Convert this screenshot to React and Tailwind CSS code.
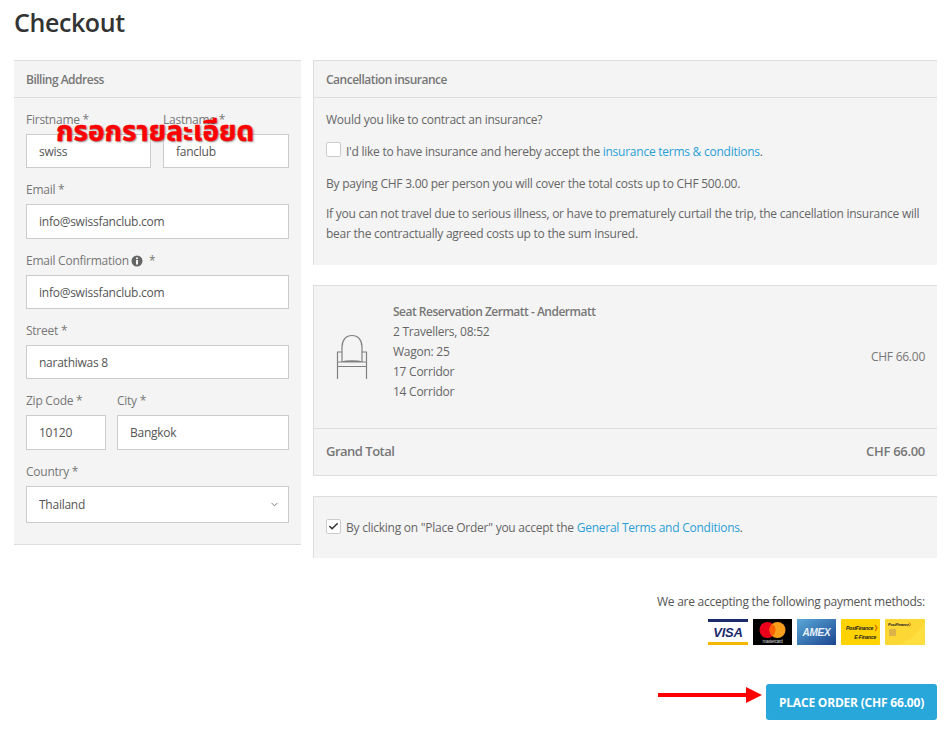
import React from "react";
import { ChevronDown, Check } from "lucide-react";

function Label({ children }) {
  return <label className="block h-5 mb-[5px] pt-px leading-5 text-[#777] whitespace-nowrap">{children}</label>;
}

const inputCls = "block w-full border border-[#ccc] bg-white px-3 text-[#555] outline-none tracking-[-0.25px]";

function Field({ label, value, h = "h-[34px]", className = "" }) {
  return (
    <div className={className}>
      <Label>{label}</Label>
      <input readOnly value={value} className={`${inputCls} ${h}`} />
    </div>
  );
}

function Chair() {
  return (
    <svg width="32" height="46" viewBox="0 0 32 46" fill="none" stroke="#808080" strokeWidth="1.2">
      <path d="M6 28V13C6 6 10 1.5 16 1.5S26 6 26 13V28" />
      <path d="M1.5 18V45M30.5 18V45M1 18H6M26 18H31" />
      <path d="M2 28H30M2 32.5H30M6 28C10 26.5 22 26.5 26 28" />
    </svg>
  );
}

function Cards() {
  return (
    <div className="flex justify-end gap-[5px] mt-[7px]">
      <svg width="40" height="26" viewBox="0 0 40 26">
        <rect width="40" height="26" fill="#fff" />
        <rect width="40" height="3" fill="#1a2a6c" />
        <rect y="23" width="40" height="3" fill="#f7b600" />
        <text x="20" y="18" textAnchor="middle" fontFamily="Liberation Sans" fontWeight="700" fontStyle="italic" fontSize="13" fill="#1a2a6c">VISA</text>
      </svg>
      <svg width="39" height="26" viewBox="0 0 39 26">
        <rect width="39" height="26" fill="#000" />
        <circle cx="14.5" cy="11" r="8" fill="#eb001b" />
        <circle cx="24.5" cy="11" r="8" fill="#f79e1b" />
        <path d="M19.5 4.8a8 8 0 0 1 0 12.4a8 8 0 0 1 0-12.4z" fill="#ff5f00" />
        <text x="19.5" y="23.5" textAnchor="middle" fontFamily="Liberation Sans" fontSize="4.5" fill="#ddd">mastercard</text>
      </svg>
      <svg width="39" height="26" viewBox="0 0 39 26">
        <defs>
          <linearGradient id="amex" x1="0" y1="0" x2="1" y2="1">
            <stop offset="0" stopColor="#5aa9d8" />
            <stop offset="1" stopColor="#1c4590" />
          </linearGradient>
        </defs>
        <rect width="39" height="26" fill="url(#amex)" />
        <text x="19.5" y="16.5" textAnchor="middle" fontFamily="Liberation Sans" fontWeight="700" fontStyle="italic" fontSize="10" fill="#e8f2fa">AMEX</text>
      </svg>
      <svg width="39" height="26" viewBox="0 0 39 26">
        <rect width="39" height="26" rx="1" fill="#ffd200" />
        <text x="5" y="11" fontFamily="Liberation Sans" fontWeight="700" fontStyle="italic" fontSize="5" fill="#222">PostFinance</text>
        <path d="M34 6l2 3-2 3" fill="none" stroke="#e8600a" strokeWidth="1.2" />
        <text x="35" y="20" textAnchor="end" fontFamily="Liberation Sans" fontWeight="700" fontStyle="italic" fontSize="5" fill="#222">E-Finance</text>
      </svg>
      <svg width="40" height="26" viewBox="0 0 40 26">
        <rect width="40" height="26" rx="1" fill="#fdd835" />
        <path d="M14 26C26 20 36 12 40 2V26Z" fill="#ffde3f" />
        <text x="3" y="7" fontFamily="Liberation Sans" fontWeight="700" fontStyle="italic" fontSize="4" fill="#222">PostFinance</text>
        <path d="M24 3.5l1.5 2-1.5 2" fill="none" stroke="#e8600a" strokeWidth="1" />
        <rect x="4" y="10" width="7" height="7" rx="1" fill="#d9b24a" />
      </svg>
    </div>
  );
}

export default function App() {
  return (
    <div className="relative w-[949px] h-[734px] overflow-hidden bg-white pl-[14px] pr-[12px] text-[12px] tracking-[-0.25px] text-[#666] font-['Open_Sans',sans-serif]">
      <h1 className="h-[60px] pt-[5px] text-[25px] leading-[34px] font-semibold text-[#333] tracking-[-0.4px]">Checkout</h1>
      <div className="flex gap-3 items-start">
        <section className="w-[287px] shrink-0 bg-[#f4f4f4] border-t border-b border-[#ddd]">
          <h2 className="h-[37px] border-b border-[#ddd] px-3 leading-[38px] font-semibold text-[#777] tracking-[-0.5px]">Billing Address</h2>
          <div className="flex flex-col gap-[11px] px-3 pt-[11px] pb-[21px]">
            <div className="flex gap-3">
              <Field label="Firstname *" value="swiss" className="w-[125px]" />
              <Field label="Lastname *" value="fanclub" className="w-[126px]" />
            </div>
            <Field label="Email *" value="info@swissfanclub.com" h="h-[35px]" />
            <div>
              <Label>
                <span className="inline-flex items-center">
                  Email Confirmation
                  <svg className="ml-[2px] mr-[6px]" width="12" height="12" viewBox="0 0 12 12">
                    <circle cx="6" cy="6" r="5.5" fill="#666" />
                    <rect x="5" y="5" width="2" height="4.5" fill="#f4f4f4" />
                    <rect x="5" y="2.5" width="2" height="1.6" fill="#f4f4f4" />
                  </svg>
                  *
                </span>
              </Label>
              <input readOnly value="info@swissfanclub.com" className={`${inputCls} h-[34px]`} />
            </div>
            <Field label="Street *" value="narathiwas 8" />
            <div className="flex gap-[11px]">
              <Field label="Zip Code *" value="10120" h="h-[35px]" className="w-[80px]" />
              <Field label="City *" value="Bangkok" h="h-[35px]" className="w-[172px]" />
            </div>
            <div>
              <Label>Country *</Label>
              <div className="relative">
                <select className={`${inputCls} h-[37px] appearance-none`} defaultValue="Thailand">
                  <option>Thailand</option>
                </select>
                <ChevronDown className="absolute right-[9px] top-[13px] text-[#777]" size={11} />
              </div>
            </div>
          </div>
        </section>

        <div className="flex-1 min-w-0">
          <section className="h-[205px] bg-[#f4f4f4] border-t border-l border-[#ddd]">
            <h2 className="h-[37px] border-b border-[#ddd] px-3 leading-[38px] font-semibold text-[#777] tracking-[-0.5px]">Cancellation insurance</h2>
            <div className="px-3 text-[#666]">
              <p className="mt-[12px] leading-5">Would you like to contract an insurance?</p>
              <div className="mt-[12px] flex items-center h-5">
                <span className="w-[15px] h-[15px] -mt-[6px] mr-[5px] bg-white border border-[#ccc] rounded-[2px] shrink-0" />
                <span>I'd like to have insurance and hereby accept the <a className="text-[#2a9fd6]">insurance terms &amp; conditions</a>.</span>
              </div>
              <p className="mt-[12px] leading-5">By paying CHF 3.00 per person you will cover the total costs up to CHF 500.00.</p>
              <p className="mt-[10px] leading-5">If you can not travel due to serious illness, or have to prematurely curtail the trip, the cancellation insurance will bear the contractually agreed costs up to the sum insured.</p>
            </div>
          </section>

          <section className="mt-5 h-[191px] bg-[#f4f4f4] border border-r-0 border-[#ddd]">
            <div className="h-[143px] flex items-start border-b border-[#ddd] pl-3 pr-3">
              <div className="w-[67px] pt-[48px] pl-[10px]"><Chair /></div>
              <div className="pt-[16px] leading-5 flex-1">
                <div className="font-semibold text-[#777] tracking-[-0.5px]">Seat Reservation Zermatt - Andermatt</div>
                <div>2 Travellers, 08:52</div>
                <div>Wagon: 25</div>
                <div>17 Corridor</div>
                <div>14 Corridor</div>
              </div>
              <div className="pt-[61px] leading-5 text-[#777]">CHF 66.00</div>
            </div>
            <div className="h-[46px] flex items-center justify-between px-3 text-[13px] font-semibold text-[#777] tracking-[-0.5px]">
              <span>Grand Total</span>
              <span className="tracking-[-0.3px]">CHF 66.00</span>
            </div>
          </section>

          <section className="mt-5 h-[62px] flex items-center bg-[#f4f4f4] border-t border-l border-[#ddd] px-3">
            <span className="w-[15px] h-[15px] -mt-[3px] mr-[5px] flex items-center justify-center bg-white border border-[#ccc] rounded-[2px] shrink-0">
              <Check size={11} strokeWidth={3.5} className="text-[#333]" />
            </span>
            <span className="pt-px">By clicking on "Place Order" you accept the <a className="text-[#2a9fd6]">General Terms and Conditions</a>.</span>
          </section>

          <div className="mt-[34px] pr-3 text-right text-[#555] leading-5">We are accepting the following payment methods:</div>
          <div className="pr-3"><Cards /></div>

          <div className="mt-[39px] flex justify-end items-start">
            <svg className="mt-px mr-[3px]" width="105" height="20" viewBox="0 0 105 20">
              <rect x="0" y="8" width="89" height="4" fill="#f00" />
              <path d="M88 2L104 10L88 18Z" fill="#f00" />
            </svg>
            <button className="w-[171px] h-[36px] pt-[2px] rounded-[3px] bg-[#27a7da] text-white font-bold text-[12px] tracking-[-0.2px]">PLACE ORDER (CHF 66.00)</button>
          </div>
        </div>
      </div>

      <div className="absolute left-[56px] top-[114px] text-[28px] leading-[38px] font-bold tracking-normal text-[#f00] whitespace-nowrap font-['Noto_Sans_Thai','DejaVu_Sans',sans-serif] [-webkit-text-stroke:0.4px_#f00] [text-shadow:1px_1px_2px_rgba(0,0,0,0.5)]">กรอกรายละเอียด</div>
    </div>
  );
}
